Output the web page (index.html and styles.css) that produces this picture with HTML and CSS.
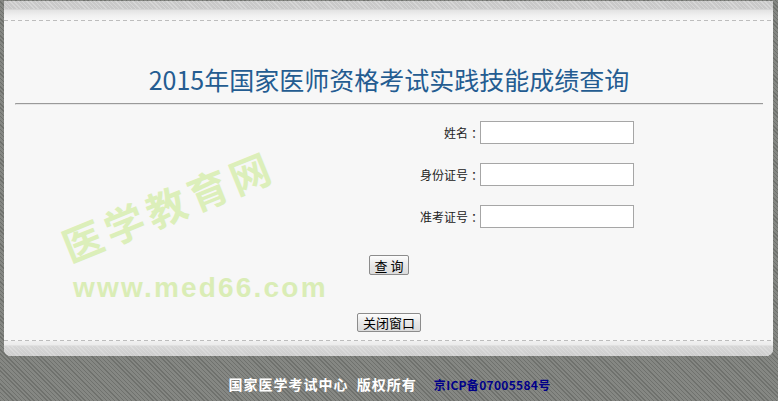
FILE: index.html
```html
<!DOCTYPE html>
<html lang="zh-CN">
<head>
<meta charset="utf-8">
<title>2015年国家医师资格考试实践技能成绩查询</title>
<link rel="stylesheet" href="styles.css">
</head>
<body>
<div class="box">
  <div class="box-top"></div>
  <div class="box-main">
    <div class="watermark">
      <div class="wm-cn">医学教育网</div>
      <div class="wm-url">www.med66.com</div>
    </div>
    <h1 class="title">2015年国家医师资格考试实践技能成绩查询</h1>
    <div class="rule"></div>
    <form class="query-form">
      <label class="field-label" for="xm">姓名<span class="colon">：</span></label>
      <input class="field-input" id="xm" type="text">
      <label class="field-label" for="sfz">身份证号<span class="colon">：</span></label>
      <input class="field-input" id="sfz" type="text">
      <label class="field-label" for="zkz">准考证号<span class="colon">：</span></label>
      <input class="field-input" id="zkz" type="text">
    </form>
    <div class="btn-row first"><button class="btn" type="button">查 询</button></div>
    <div class="btn-row second"><button class="btn" type="button">关闭窗口</button></div>
  </div>
  <div class="box-bottom"></div>
</div>
<div class="footer">
  <span class="copy">国家医学考试中心&nbsp;&nbsp;版权所有</span><span class="icp">京ICP备07005584号</span>
</div>
</body>
</html>
```
FILE: styles.css
```css
html, body {
  margin: 0;
  padding: 0;
}
body {
  background-color: #7c7d7a;
  background-image: repeating-linear-gradient(45deg, #6f716d 0 1px, #858783 1px 3px);
  font-family: "Noto Sans CJK SC", "Noto Sans", sans-serif;
  height: 401px;
  overflow: hidden;
}
.box {
  margin: 1px 5px 0 4px;
  background: #f7f7f7;
  border-radius: 0 0 7px 7px;
}
.box-top {
  height: 19px;
  background:
    repeating-linear-gradient(45deg, rgba(255,255,255,0.25) 0 1px, rgba(0,0,0,0) 1px 3px) top / 100% 8px no-repeat,
    linear-gradient(#c9c9c9 0, #c9c9c9 8px, #e2e2e2 9px, #f1f1f1 15px, #f7f7f7 19px);
}
.box-main {
  position: relative;
  padding: 44px 10px 0 11px;
  height: 277px;
  background:
    repeating-linear-gradient(90deg, #bdbdbd 0 4px, transparent 4px 7px) top / 100% 1px no-repeat,
    repeating-linear-gradient(90deg, #bdbdbd 0 4px, transparent 4px 7px) bottom / 100% 1px no-repeat,
    #f7f7f7;
}
.title {
  margin: 0;
  font-size: 25px;
  line-height: 30px;
  font-weight: normal;
  text-align: center;
  color: #245c91;
  position: relative;
}
.rule {
  margin-top: 9px;
  height: 0;
  border-top: 1px solid #9a9a9a;
  border-bottom: 1px solid #e6e6e6;
  border-left: 1px solid #bdbdbd;
  position: relative;
}
.query-form {
  margin-top: 16px;
  display: grid;
  grid-template-columns: 465px 154px;
  row-gap: 19px;
  position: relative;
}
.field-label {
  font-size: 12px;
  line-height: 23px;
  color: #222;
  text-align: right;
}
.colon {
  display: inline-block;
  width: 12px;
  text-align: center;
  text-indent: 3px;
}
.field-input {
  box-sizing: border-box;
  width: 154px;
  height: 23px;
  margin: 0;
  border: 1px solid #a6a6a6;
  background: #fff;
  padding: 1px 3px;
}
.btn-row {
  display: flex;
  justify-content: center;
  position: relative;
}
.btn-row.first {
  margin-top: 27px;
}
.btn-row.second {
  margin-top: 38px;
}
.btn {
  font-family: "Noto Sans CJK SC", sans-serif;
  font-size: 13px;
  line-height: 17px;
  height: 20px;
  padding: 0 5px;
  margin: 0;
  color: #000;
  border: 1px solid #8c8c8c;
  border-radius: 2px;
  background: linear-gradient(#fdfdfd, #e8e8e8 50%, #dcdcdc);
}
.btn-row.second .btn {
  height: 19px;
  line-height: 16px;
}
.watermark {
  position: absolute;
  inset: 0;
  pointer-events: none;
}
.wm-cn {
  position: absolute;
  left: 164px;
  top: 185px;
  transform: translate(-50%, -50%) rotate(-22deg);
  font-size: 40px;
  line-height: 44px;
  font-weight: bold;
  letter-spacing: 5px;
  color: #dcefba;
  white-space: nowrap;
}
.wm-url {
  position: absolute;
  left: 69px;
  top: 254px;
  font-family: "Liberation Sans", Arial, sans-serif;
  font-size: 28px;
  line-height: 28px;
  font-weight: bold;
  letter-spacing: 2.2px;
  color: #daedb6;
  white-space: nowrap;
}
.box-bottom {
  height: 15px;
  border-radius: 0 0 7px 7px;
  background:
    repeating-linear-gradient(45deg, rgba(255,255,255,0.2) 0 1px, rgba(0,0,0,0) 1px 3px) bottom / 100% 10px no-repeat,
    linear-gradient(#f0f0f0 0, #ececec 4px, #d6d6d6 5px, #cdcdcd 15px);
}
.footer {
  margin-top: 17px;
  line-height: 20px;
  text-align: center;
  font-weight: bold;
  padding-left: 1px;
}
.copy {
  color: #fff;
  font-size: 14px;
  letter-spacing: 1px;
}
.icp {
  color: #00008a;
  font-size: 12px;
  margin-left: 17px;
  letter-spacing: 0.3px;
}
```
